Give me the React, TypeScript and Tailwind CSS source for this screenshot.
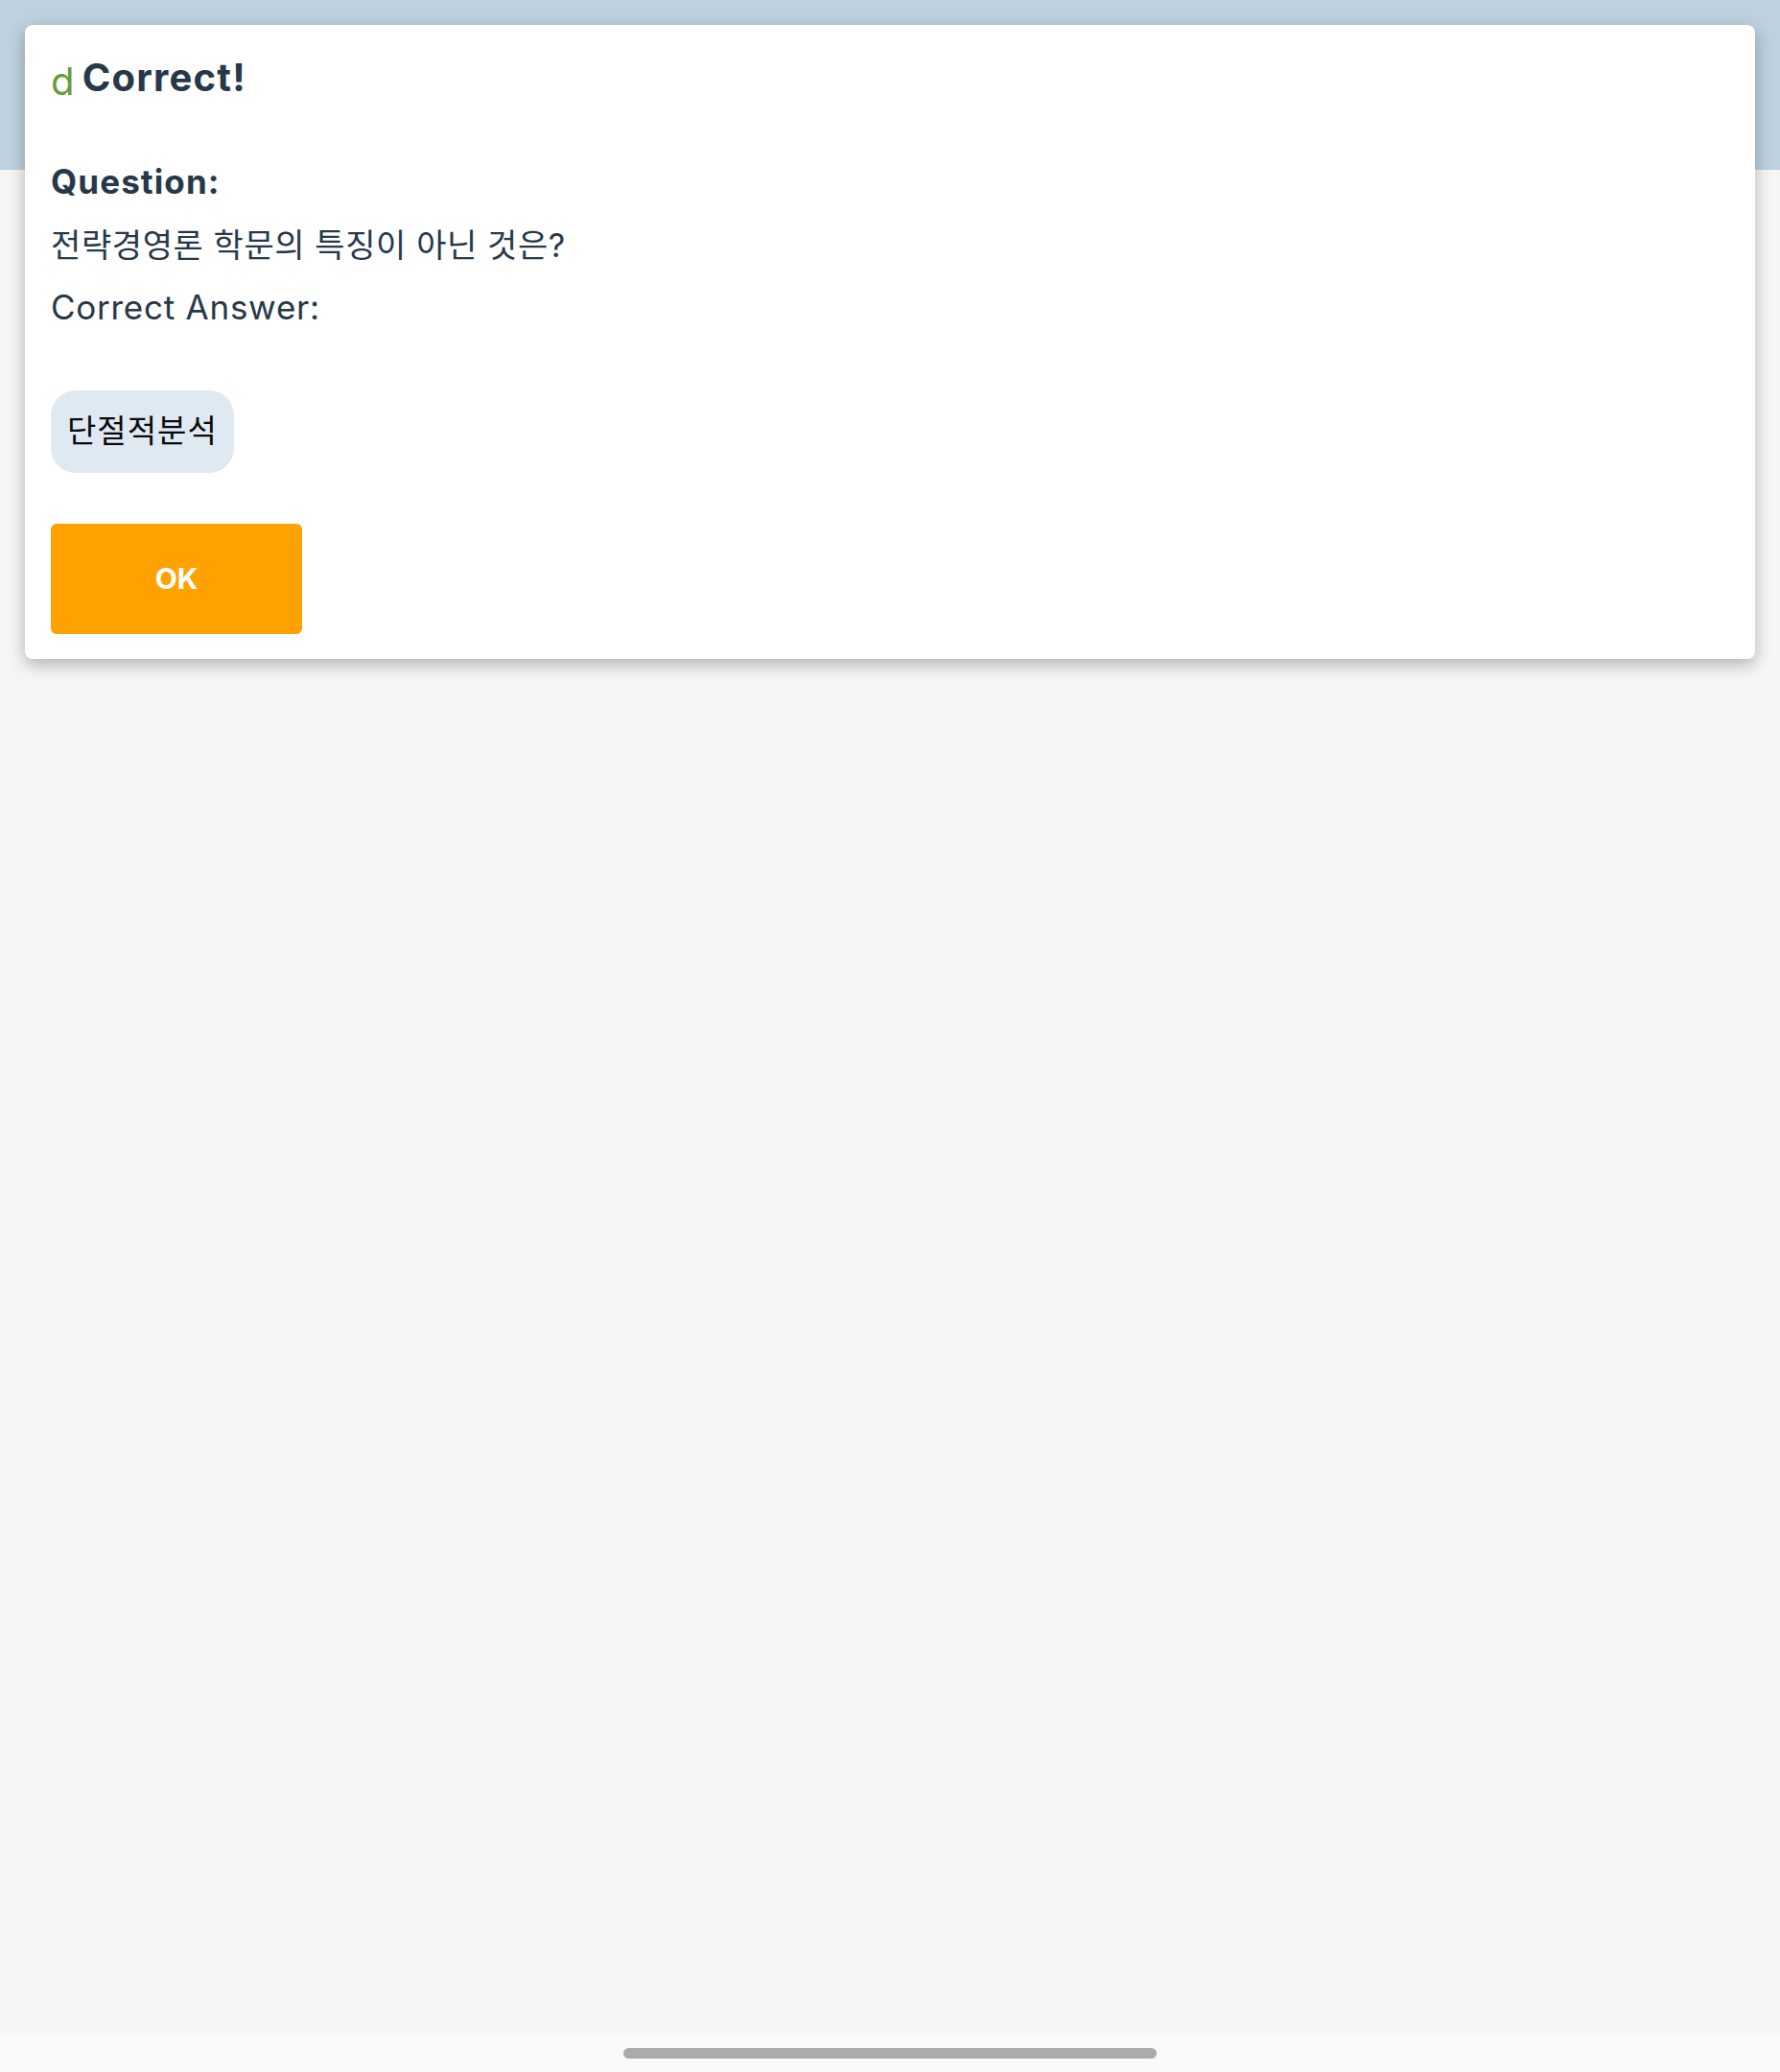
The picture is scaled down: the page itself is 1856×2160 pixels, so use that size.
import React from 'react';

const latin = "font-['Inter','Noto_Sans_CJK_KR',sans-serif]";

export default function App() {
  return (
    <div className={`relative flex h-[2160px] w-full flex-col overflow-hidden bg-[#f6f6f6] ${latin}`}>
      {/* App header band behind the dialog */}
      <div className="h-[177px] w-full bg-[#bed1df]" />

      <div className="flex-1" />

      {/* Gesture navigation area */}
      <div className="flex h-[40px] w-full justify-center bg-[#fafafa] pt-[15px]">
        <div className="h-[11px] w-[556px] rounded-full bg-[#ababab]" />
      </div>

      {/* Result dialog */}
      <div className="absolute left-[26px] right-[26px] top-[26px] rounded-[8px] bg-white px-[27px] pb-[26px] pt-[31px] shadow-[0_6px_18px_rgba(0,0,0,0.28)]">
        <h2 className="text-[40px] leading-[48px] text-[#263849]">
          <span className="relative top-[4px] font-normal text-[#6a9c3a]">d</span>{' '}
          <span className="-ml-[3px] font-bold tracking-[1.2px]">Correct!</span>
        </h2>

        <div className="mt-[62px] text-[35px] leading-[45px] text-[#263849]">
          <p className="font-bold tracking-[1.1px]">Question:</p>
          <p className="mt-[21px] text-[34px] tracking-[0.6px]">전략경영론 학문의 특징이 아닌 것은?</p>
          <p className="mt-[20px] tracking-[0.75px]">Correct Answer:</p>
        </div>

        <div className="mt-[64px] flex">
          <span className="flex h-[86px] items-center rounded-[26px] bg-[#dfe9f2] px-[17px] text-[33px] font-normal tracking-[1px] text-[#0a0a0a]">
            단절적분석
          </span>
        </div>

        <button className="mt-[53px] flex h-[115px] w-[262px] items-center justify-center rounded-[6px] bg-[#ffa200] text-[30px] font-bold text-white">
          OK
        </button>
      </div>
    </div>
  );
}
